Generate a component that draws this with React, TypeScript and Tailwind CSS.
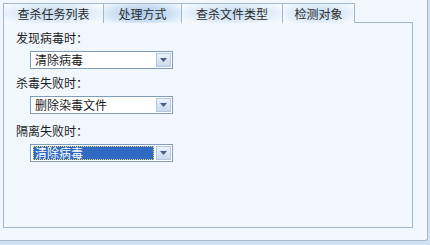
import React from "react";

const tabs = [
  { label: "查杀任务列表", w: "w-[101px]" },
  { label: "处理方式", w: "w-[79px]", active: true },
  { label: "查杀文件类型", w: "w-[102px]" },
  { label: "检测对象", w: "w-[73px]" },
];

function Combo({ value, focused }: { value: string; focused?: boolean }) {
  return (
    <div className="ml-[14px] flex h-[18px] w-[143px] items-center border border-[#7f9db9] bg-white p-[1px]">
      <div className="flex h-full flex-1 items-center pl-[1px]">
        {focused ? (
          <span className="flex h-full w-full items-center border border-dotted border-[#e8d86a] bg-[#316ac5] pl-[1px] text-white">
            {value}
          </span>
        ) : (
          <span className="pl-[2px] text-[#1a1a1a]">{value}</span>
        )}
      </div>
      <div className="ml-[2px] flex h-full w-[15px] items-center justify-center border border-[#b5c8de] bg-[linear-gradient(#e9f1fb,#c9daee)]">
        <svg width="7" height="4" viewBox="0 0 7 4">
          <path d="M0 0h7L3.5 4z" fill="#4a5d80" />
        </svg>
      </div>
    </div>
  );
}

export default function App() {
  return (
    <div
      className="h-[245px] w-[430px] bg-[#cfe2f5] text-[12px] leading-4 text-[#1c1c1c]"
      style={{ fontFamily: '"Noto Sans CJK SC", sans-serif' }}
    >
      <div className="h-[241px] w-[428px] rounded-br-[3px] border-r border-b border-[#a9bccf] bg-[#f1f7fd] pl-[3px] pt-[3px]">
        <div className="flex h-[20px] w-[410px]">
          {tabs.map((t) => (
            <div
              key={t.label}
              className={`${t.w} -ml-px flex items-center justify-center border border-b-0 border-[#a3b7cb] text-[#2a2a2a] first:ml-0 ${
                t.active
                  ? "bg-[radial-gradient(ellipse_65%_75%_at_center,#a9caec_0%,#cfe2f5_60%,#f4f9fe_100%)]"
                  : "bg-[radial-gradient(ellipse_65%_75%_at_center,#c3daf1_0%,#e1edf9_60%,#fbfdff_100%)]"
              }`}
            >
              {t.label}
            </div>
          ))}
          <div className="flex-1 border-b border-[#a3b7cb]" />
        </div>
        <div className="flex h-[205px] w-[410px] flex-col border border-t-0 border-[#a3b7cb] pl-[12px] pt-[7px]">
          <div>发现病毒时：</div>
          <div className="mt-[5px]">
            <Combo value="清除病毒" />
          </div>
          <div className="mt-[6px]">杀毒失败时：</div>
          <div className="mt-[5px]">
            <Combo value="删除染毒文件" />
          </div>
          <div className="mt-[9px]">隔离失败时：</div>
          <div className="mt-[5px]">
            <Combo value="清除病毒" focused />
          </div>
        </div>
      </div>
    </div>
  );
}
